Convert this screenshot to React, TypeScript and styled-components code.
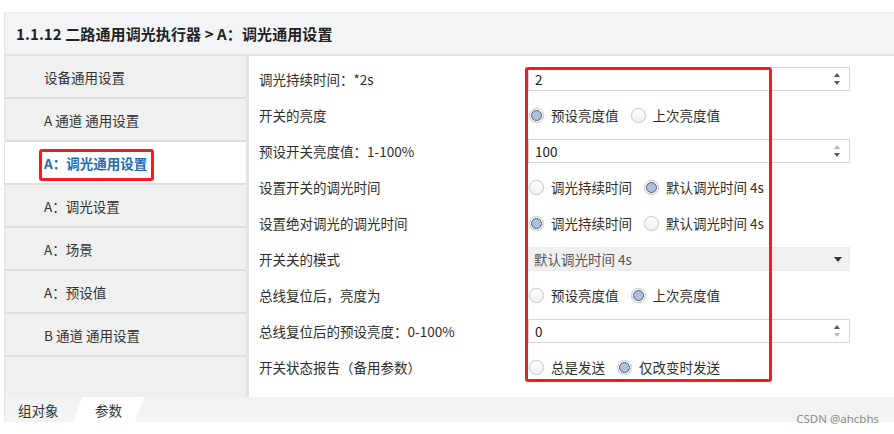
import React from "react";
import styled, { createGlobalStyle, css } from "styled-components";

const Global = createGlobalStyle`
  html, body { margin: 0; padding: 0; background: #ffffff; }
  body { font-family: "Noto Sans CJK SC", "Noto Sans", sans-serif; color: #2b2b2b; }
  * { box-sizing: border-box; }
`;

const Page = styled.div`
  position: relative;
  width: 894px;
  height: 434px;
  padding: 12px 0 0 4px;
  overflow: hidden;
`;

const Frame = styled.div`
  display: grid;
  grid-template-rows: 44px 341px 25px;
  border-left: 1px solid #e3e4e6;
  width: 890px;
`;

const Header = styled.div`
  display: flex;
  align-items: center;
  padding-left: 11px;
  background: #f3f4f6;
  border-top: 1px solid #ececee;
  border-bottom: 2px solid #e1e2e4;
  font-size: 15px;
  font-weight: 700;
  color: #222;
  letter-spacing: 0.1px;
`;

const Body = styled.div`
  display: flex;
  min-height: 0;
`;

const Sidebar = styled.nav`
  width: 244px;
  flex: none;
  background: #f0f0f0;
  border-right: 3px solid #e3e3e3;
  display: flex;
  flex-direction: column;
`;

const NavItem = styled.div<{ $active?: boolean }>`
  height: 43px;
  flex: none;
  display: flex;
  align-items: center;
  padding-left: 39px;
  font-size: 13.5px;
  border-bottom: 2px solid #dedede;
  background: #f0f0f0;
  color: #333;
  ${(p) =>
    p.$active &&
    css`
      background: #ffffff;
      color: #2069b5;
      font-weight: 700;
    `}
`;

const Marked = styled.span`
  position: relative;
  line-height: 20px;
  &::after {
    content: "";
    position: absolute;
    left: -5px;
    right: -7px;
    top: -4px;
    bottom: -8px;
    border: 3px solid #f21d1d;
    border-radius: 3px;
  }
`;

const Content = styled.div`
  position: relative;
  flex: 1;
  background: #ffffff;
  padding: 5px 0 0 10px;
  display: grid;
  grid-template-columns: 269px 322px;
  grid-auto-rows: 36px;
  align-content: start;
`;

const Label = styled.div`
  display: flex;
  align-items: center;
  font-size: 13.5px;
  color: #2e2e2e;
`;

const Cell = styled.div`
  display: flex;
  align-items: center;
`;

const InputBox = styled.div`
  width: 100%;
  height: 24px;
  border: 1px solid #d6d6d6;
  background: #fff;
  display: flex;
  align-items: center;
  padding: 0 8px 0 6px;
  font-size: 13.5px;
  color: #222;
`;

const Value = styled.span`
  flex: 1;
`;

const Spin = styled.div`
  display: flex;
  flex-direction: column;
  gap: 4px;
  width: 8px;
  align-items: center;
`;

const Arrow = styled.span<{ $dir: "up" | "down"; $dim?: boolean }>`
  width: 0;
  height: 0;
  border-left: 3.5px solid transparent;
  border-right: 3.5px solid transparent;
  ${(p) =>
    p.$dir === "up"
      ? css`border-bottom: 4px solid ${p.$dim ? "#b8b8b8" : "#555"};`
      : css`border-top: 4px solid ${p.$dim ? "#b8b8b8" : "#555"};`}
`;

const SelectBox = styled.div`
  width: 100%;
  height: 24px;
  background: #f0f0f0;
  border: 1px solid #ececec;
  display: flex;
  align-items: center;
  padding: 0 7px 0 5px;
  font-size: 13.5px;
  color: #555;
`;

const Caret = styled.span`
  width: 0;
  height: 0;
  border-left: 4.5px solid transparent;
  border-right: 4.5px solid transparent;
  border-top: 5px solid #333;
`;

const RadioGroup = styled.div`
  display: flex;
  align-items: center;
  padding-left: 1px;
`;

const Option = styled.label`
  display: flex;
  align-items: center;
  gap: 7px;
  margin-right: 12px;
  font-size: 13.5px;
  color: #2e2e2e;
`;

const Circle = styled.span<{ $on?: boolean }>`
  width: 15px;
  height: 15px;
  border-radius: 50%;
  border: 1px solid #c9c9c9;
  background: linear-gradient(#ffffff, #f1f1f1);
  box-shadow: 0 0 0 0.5px #eeeeee;
  display: flex;
  align-items: center;
  justify-content: center;
  flex: none;
  &::after {
    content: "";
    display: ${(p) => (p.$on ? "block" : "none")};
    width: 9px;
    height: 9px;
    border-radius: 50%;
    background: #aec0d6;
    border: 1px solid #4d6383;
  }
`;

const Annotation = styled.div`
  position: absolute;
  left: 276px;
  top: 11px;
  width: 247px;
  height: 315px;
  border: 3px solid #f21d1d;
  border-radius: 3px;
  pointer-events: none;
`;

const TabBar = styled.div`
  display: flex;
  align-items: stretch;
  background: #f2f3f5;
`;

const Tab = styled.div<{ $active?: boolean }>`
  display: flex;
  align-items: center;
  font-size: 13.5px;
  color: #333;
  ${(p) =>
    p.$active
      ? css`
          width: 71px;
          justify-content: center;
          background: #ffffff;
          clip-path: polygon(9px 0, 100% 0, calc(100% - 9px) 100%, 0 100%);
        `
      : css`
          width: 68px;
          padding-left: 13px;
        `}
`;

const Watermark = styled.div`
  position: absolute;
  right: 15px;
  top: 411px;
  font-family: "Noto Sans", sans-serif;
  font-size: 11.5px;
  color: #8c8c8c;
`;

type Row =
  | { label: string; kind: "input"; value: string; upDim?: boolean; downDim?: boolean }
  | { label: string; kind: "radio"; options: string[]; selected: number }
  | { label: string; kind: "select"; value: string };

const rows: Row[] = [
  { label: "调光持续时间：*2s", kind: "input", value: "2" },
  { label: "开关的亮度", kind: "radio", options: ["预设亮度值", "上次亮度值"], selected: 0 },
  { label: "预设开关亮度值：1-100%", kind: "input", value: "100", upDim: true },
  { label: "设置开关的调光时间", kind: "radio", options: ["调光持续时间", "默认调光时间 4s"], selected: 1 },
  { label: "设置绝对调光的调光时间", kind: "radio", options: ["调光持续时间", "默认调光时间 4s"], selected: 0 },
  { label: "开关关的模式", kind: "select", value: "默认调光时间 4s" },
  { label: "总线复位后，亮度为", kind: "radio", options: ["预设亮度值", "上次亮度值"], selected: 1 },
  { label: "总线复位后的预设亮度：0-100%", kind: "input", value: "0", downDim: true },
  { label: "开关状态报告（备用参数）", kind: "radio", options: ["总是发送", "仅改变时发送"], selected: 1 },
];

const navItems = [
  "设备通用设置",
  "A 通道 通用设置",
  "A：调光通用设置",
  "A：调光设置",
  "A：场景",
  "A：预设值",
  "B 通道 通用设置",
];

function Control({ row }: { row: Row }) {
  if (row.kind === "input") {
    return (
      <InputBox>
        <Value>{row.value}</Value>
        <Spin>
          <Arrow $dir="up" $dim={row.upDim} />
          <Arrow $dir="down" $dim={row.downDim} />
        </Spin>
      </InputBox>
    );
  }
  if (row.kind === "select") {
    return (
      <SelectBox>
        <Value>{row.value}</Value>
        <Caret />
      </SelectBox>
    );
  }
  return (
    <RadioGroup>
      {row.options.map((o, i) => (
        <Option key={o}>
          <Circle $on={i === row.selected} />
          {o}
        </Option>
      ))}
    </RadioGroup>
  );
}

export default function App() {
  return (
    <Page>
      <Global />
      <Frame>
        <Header>1.1.12 二路通用调光执行器 &gt; A：调光通用设置</Header>
        <Body>
          <Sidebar>
            {navItems.map((n, i) => (
              <NavItem key={n} $active={i === 2}>
                {i === 2 ? <Marked>{n}</Marked> : n}
              </NavItem>
            ))}
          </Sidebar>
          <Content>
            {rows.map((r) => (
              <React.Fragment key={r.label}>
                <Label>{r.label}</Label>
                <Cell>
                  <Control row={r} />
                </Cell>
              </React.Fragment>
            ))}
            <Annotation />
          </Content>
        </Body>
        <TabBar>
          <Tab>组对象</Tab>
          <Tab $active>参数</Tab>
        </TabBar>
      </Frame>
      <Watermark>CSDN @ahcbhs</Watermark>
    </Page>
  );
}
